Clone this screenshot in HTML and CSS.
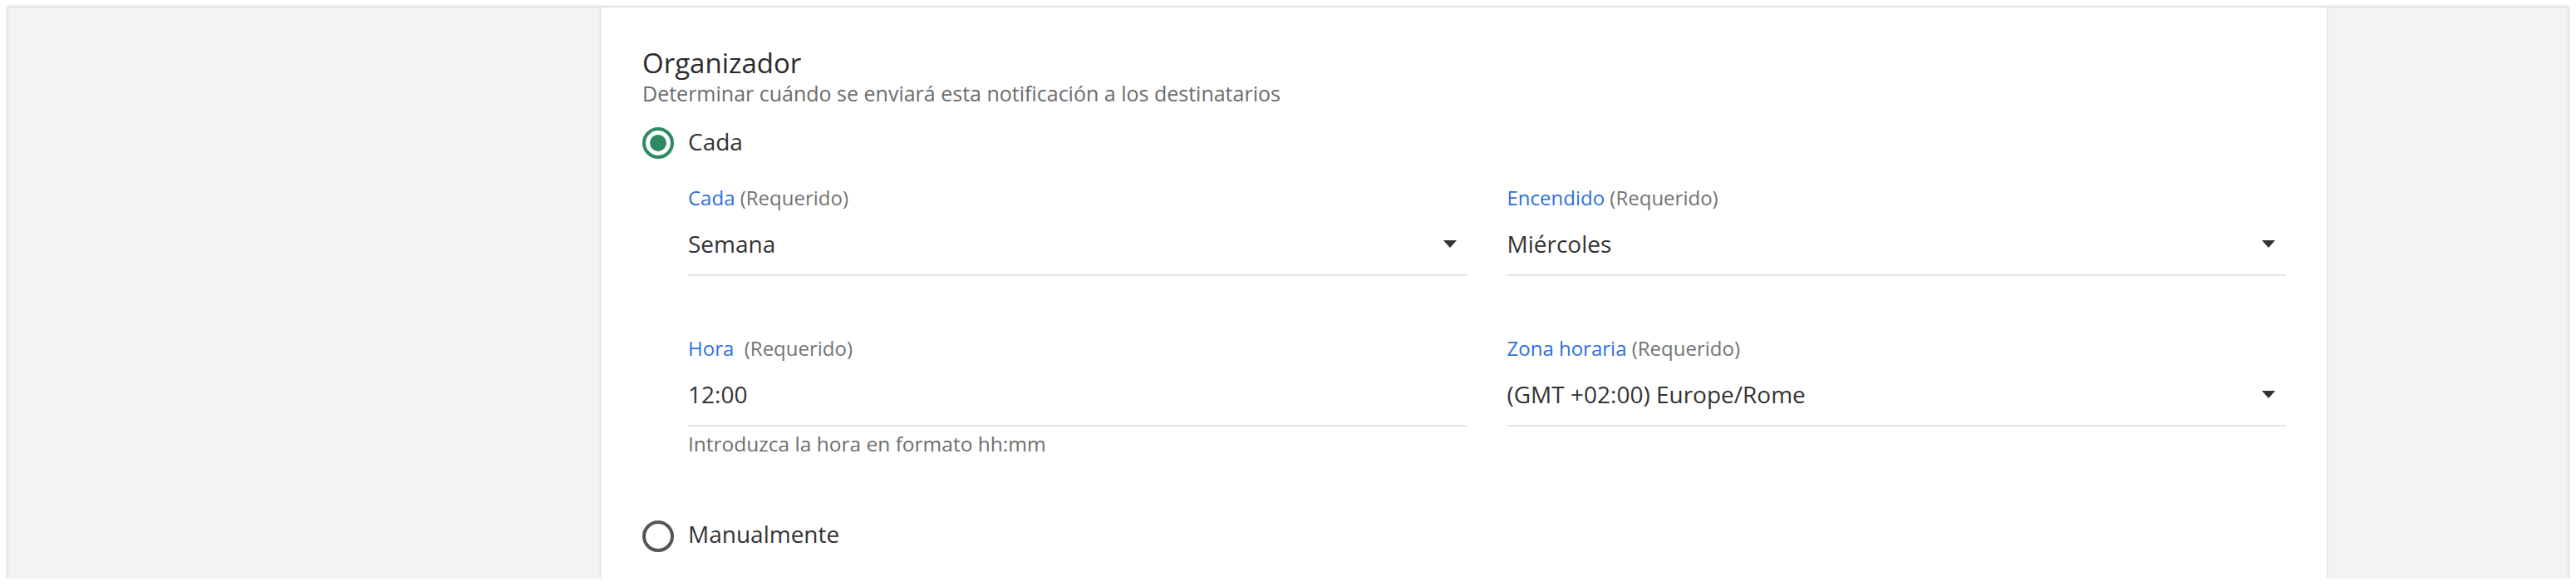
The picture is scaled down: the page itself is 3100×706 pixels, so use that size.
FILE: index.html
```html
<!DOCTYPE html>
<html lang="es">
<head>
<meta charset="utf-8">
<title>Organizador</title>
<link rel="stylesheet" href="styles.css">
</head>
<body>
<div class="frame">
  <div class="spacer"></div>
  <section class="panel">
    <h2 class="title">Organizador</h2>
    <p class="subtitle">Determinar cuándo se enviará esta notificación a los destinatarios</p>

    <label class="radio-row">
      <span class="radio radio-checked"></span>
      <span class="radio-label">Cada</span>
    </label>

    <div class="fields">
      <div class="field">
        <div class="field-label"><span class="field-name">Cada</span> <span class="field-req">(Requerido)</span></div>
        <div class="select">
          <span class="select-value">Semana</span>
          <span class="caret"></span>
        </div>
      </div>
      <div class="field">
        <div class="field-label"><span class="field-name">Encendido</span> <span class="field-req">(Requerido)</span></div>
        <div class="select">
          <span class="select-value">Miércoles</span>
          <span class="caret"></span>
        </div>
      </div>
      <div class="field">
        <div class="field-label"><span class="field-name">Hora</span>&nbsp; <span class="field-req">(Requerido)</span></div>
        <div class="select">
          <span class="select-value">12:00</span>
        </div>
        <div class="helper">Introduzca la hora en formato hh:mm</div>
      </div>
      <div class="field">
        <div class="field-label"><span class="field-name">Zona horaria</span> <span class="field-req">(Requerido)</span></div>
        <div class="select">
          <span class="select-value">(GMT +02:00) Europe/Rome</span>
          <span class="caret"></span>
        </div>
      </div>
    </div>

    <label class="radio-row radio-row-last">
      <span class="radio"></span>
      <span class="radio-label">Manualmente</span>
    </label>
  </section>
  <div class="spacer"></div>
</div>
</body>
</html>
```

FILE: styles.css
```css
html, body {
  margin: 0;
  padding: 0;
  background: #ffffff;
}

body {
  font-family: "Open Sans", "Noto Sans", sans-serif;
  color: #333333;
}

.frame {
  margin: 9px 10px 0 10px;
  height: 687px;
  background: #f3f3f3;
  box-shadow: 0 0 3px 1px rgba(0, 0, 0, 0.22);
  display: grid;
  grid-template-columns: 713px 2077px 1fr;
  overflow: hidden;
}

.panel {
  background: #ffffff;
  box-shadow: 0 0 3px rgba(0, 0, 0, 0.18);
  padding: 51px 49px 0 50px;
  display: flex;
  flex-direction: column;
}

.title {
  margin: 0;
  font-size: 33px;
  line-height: 32px;
  font-weight: 400;
  color: #2b2b2b;
}

.subtitle {
  margin: 10px 0 0 0;
  font-size: 25px;
  line-height: 20px;
  color: #6b6b6b;
}

.radio-row {
  margin-top: 28px;
  display: flex;
  align-items: center;
  gap: 17px;
  height: 40px;
}

.radio-row-last {
  margin-top: 72px;
}

.radio {
  box-sizing: border-box;
  width: 38px;
  height: 38px;
  margin-top: 6px;
  border-radius: 50%;
  border: 4px solid #555555;
  flex: none;
  display: flex;
  align-items: center;
  justify-content: center;
}

.radio-checked {
  border-color: #2f8a62;
  margin-top: 4px;
}

.radio-checked::after {
  content: "";
  width: 20px;
  height: 20px;
  border-radius: 50%;
  background: #2f8a62;
}

.radio-label {
  font-size: 28px;
  line-height: 40px;
  color: #333333;
}

.fields {
  margin: 32px 0 0 55px;
  display: grid;
  grid-template-columns: 1fr 1fr;
  column-gap: 48px;
  row-gap: 71px;
  align-items: start;
}

.field-label {
  font-size: 24px;
  line-height: 32px;
  white-space: nowrap;
}

.field-name {
  color: #2f70dd;
}

.field-req {
  color: #737373;
}

.select {
  margin-top: 19px;
  padding-bottom: 17px;
  border-bottom: 2px solid #e4e4e4;
  display: flex;
  align-items: center;
  justify-content: space-between;
  padding-right: 13px;
}

.select-value {
  font-size: 28px;
  line-height: 40px;
  color: #333333;
}

.caret {
  width: 0;
  height: 0;
  border-left: 8px solid transparent;
  border-right: 8px solid transparent;
  border-top: 9px solid #333333;
}

.helper {
  margin-top: 5px;
  font-size: 24.5px;
  line-height: 32px;
  color: #6e6e6e;
}
```
